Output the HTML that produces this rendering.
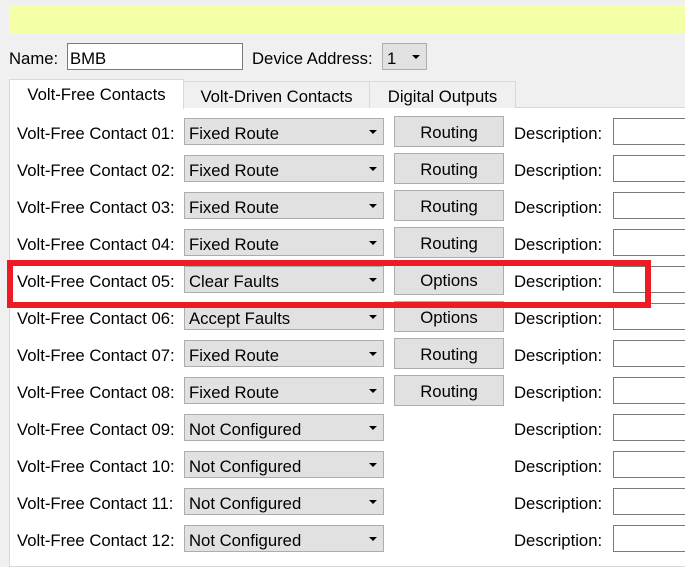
<!DOCTYPE html>
<html><head><meta charset="utf-8"><style>
*{margin:0;padding:0;box-sizing:border-box}
body{width:685px;height:560px;background:#f0f0f0;font-family:"Liberation Sans",sans-serif;font-size:16.7px;color:#000;position:relative;overflow:hidden}
.a{position:absolute;white-space:nowrap}
.yel{left:9px;top:5px;width:690px;height:29px;background:#f5ffa8}
.inp{background:#fff;border:1px solid #7a7a7a}
.cb{background:#e1e1e1;border:1px solid #adadad}
.cb::after{content:"";position:absolute;right:6px;top:11px;border-left:4px solid transparent;border-right:4px solid transparent;border-top:4px solid #000}
.btn{background:#e1e1e1;border:1px solid #adadad;text-align:center;line-height:31px}
.tab{background:#f0f0f0;border:1px solid #d9d9d9;border-bottom:none;text-align:center;line-height:29px}
.panel{left:9px;top:107px;width:700px;height:460px;background:#fff;border:1px solid #d9d9d9}
</style></head><body>
<div class="a yel"></div>
<div class="a" style="left:9px;top:49px">Name:</div>
<div class="a inp" style="left:67px;top:43px;width:176px;height:27px;padding:5px 2px 0">BMB</div>
<div class="a" style="left:252px;top:49px">Device Address:</div>
<div class="a cb" style="left:382px;top:43px;width:45px;height:27px;padding:5px 4px 0">1</div>
<div class="a panel"></div>
<div class="a tab" style="left:183px;top:81px;width:187px;height:27px">Volt-Driven Contacts</div>
<div class="a tab" style="left:369px;top:81px;width:147px;height:27px">Digital Outputs</div>
<div class="a tab" style="left:9px;top:79px;width:175px;height:30px;background:#fff;line-height:30px">Volt-Free Contacts</div>
<div id="rows"></div>
<div class="a" style="left:7px;top:260px;width:644px;height:48px;border:6px solid #ed1c24"></div>
<script>
var v=["Fixed Route","Fixed Route","Fixed Route","Fixed Route","Clear Faults","Accept Faults","Fixed Route","Fixed Route","Not Configured","Not Configured","Not Configured","Not Configured"];
var b=["Routing","Routing","Routing","Routing","Options","Options","Routing","Routing","","","",""];
var h="";
for(var i=0;i<12;i++){var y=118+i*37;var n=(i<9?"0":"")+(i+1);
h+='<div class="a" style="left:17px;top:'+(y+6)+'px">Volt-Free Contact '+n+':</div>';
h+='<div class="a cb" style="left:184px;top:'+y+'px;width:200px;height:27px;padding:5px 4px 0">'+v[i]+'</div>';
if(b[i])h+='<div class="a btn" style="left:394px;top:'+(y-2)+'px;width:110px;height:31px">'+b[i]+'</div>';
h+='<div class="a" style="left:514px;top:'+(y+6)+'px">Description:</div>';
h+='<div class="a inp" style="left:613px;top:'+y+'px;width:90px;height:27px"></div>';}
document.getElementById("rows").innerHTML=h;
</script>
</body></html>
